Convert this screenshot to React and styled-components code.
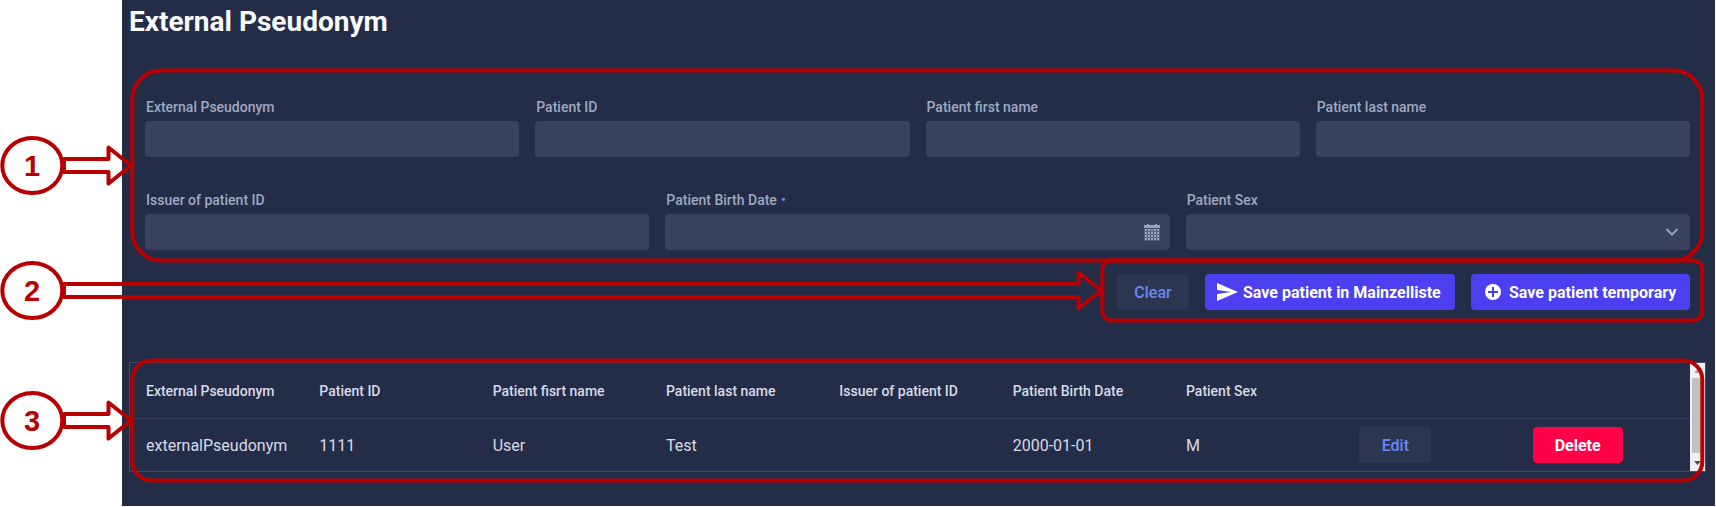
import React from 'react';
import styled, { createGlobalStyle } from 'styled-components';

const Global = createGlobalStyle`
  * { box-sizing: border-box; }
  body { margin: 0; background: #fff; font-family: Roboto, "Liberation Sans", sans-serif; overflow: hidden; }
`;

const Screen = styled.div`
  position: relative;
  height: 507px;
  padding: 0 1px 0 122px;
  background: #fff;
`;

const Panel = styled.main`
  height: 506px;
  background: #232d48;
  color: #d7dbe5;
  padding: 0 9px 0 7px;
  overflow: hidden;
`;

const Title = styled.h2`
  margin: 4px 0 0;
  font-size: 28px;
  line-height: 35px;
  font-weight: 700;
  color: #fbfcfe;
`;

const Form = styled.section`
  margin-top: 57px;
  padding: 0 16px;
`;

const FieldRow = styled.div`
  display: grid;
  grid-template-columns: repeat(${(p) => p.$columns}, 1fr);
  column-gap: 16px;
  height: ${(p) => p.$height}px;
`;

const Label = styled.label`
  display: block;
  margin-left: 1px;
  height: 25px;
  line-height: 22px;
  font-size: 14px;
  font-weight: 500;
  color: #9fa9c0;
`;

const Required = styled.span`
  margin-left: 4px;
  color: #6a86fb;
`;

const Input = styled.div`
  display: flex;
  align-items: center;
  justify-content: flex-end;
  height: 36px;
  padding-right: ${(p) => p.$inset || 11}px;
  border-radius: 4px;
  background: #39415d;
  color: #98a3bd;
`;

const Actions = styled.div`
  display: flex;
  justify-content: flex-end;
  gap: 16px;
  padding-right: 16px;
`;

const Button = styled.button`
  display: flex;
  align-items: center;
  justify-content: ${(p) => (p.$inset ? 'flex-start' : 'center')};
  gap: ${(p) => p.$gap || 0}px;
  width: ${(p) => p.$width}px;
  height: 36px;
  padding: 0 0 0 ${(p) => p.$inset || 0}px;
  border: 0;
  border-radius: 4px;
  font: ${(p) => (p.$kind ? 700 : 500)} 16px Roboto, "Liberation Sans", sans-serif;
  white-space: nowrap;
  color: ${(p) => (p.$kind ? '#fff' : '#6a86fb')};
  background: ${(p) => ({ primary: '#4b3ff0', danger: '#ff0048' })[p.$kind] || '#2d3650'};
`;

const GridFrame = styled.section`
  display: flex;
  height: 110px;
  margin-top: 52px;
  border: 1px solid #414b67;
`;

const Rows = styled.div`
  flex: 1;
`;

const Row = styled.div`
  display: grid;
  grid-template-columns: repeat(9, 1fr);
  align-items: center;
  height: ${(p) => (p.$head ? 56 : 52)}px;
  border-bottom: ${(p) => (p.$head ? '1px solid #39435e' : '0')};
  font-size: ${(p) => (p.$head ? 14 : 16)}px;
  font-weight: ${(p) => (p.$head ? 500 : 400)};
`;

const Cell = styled.div`
  padding-left: 16px;
  white-space: nowrap;
`;

const Scrollbar = styled.div`
  display: flex;
  flex-direction: column;
  align-items: center;
  width: 15px;
  padding-top: 6px;
  background: #f1f1f1;
`;

const Thumb = styled.div`
  width: 11px;
  height: 75px;
  margin: 5px 0 8px;
  background: #c1c1c1;
`;

const Annotations = styled.svg`
  position: absolute;
  inset: 0;
  pointer-events: none;
`;

const Calendar = () => (
  <svg width="16" height="17" viewBox="0 0 16 17" fill="currentColor">
    <path d="M0 1h3V0h2v1h6V0h2v1h3v3H0z" />
    <path d="M.5 4v12.500h15V4M.5 7.500h15M.5 10.500h15M.5 13.500h15M3.500 4v12M6.500 4v12M9.500 4v12M12.500 4v12" fill="none" stroke="currentColor" strokeWidth="1" opacity=".3" />
    {[5, 8, 11, 14].map((y) => [1, 4, 7, 10, 13].map((x) => <rect key={`${x}-${y}`} x={x} y={y} width="2" height="2" />))}
  </svg>
);

const Chevron = () => (
  <svg width="14" height="10" viewBox="0 0 14 10" fill="none" stroke="currentColor" strokeWidth="2">
    <path d="M1.500 2 7 7.500 12.500 2" />
  </svg>
);

const Plane = () => (
  <svg width="21" height="18" viewBox="0 0 21 18" fill="#fff">
    <path d="M0 0 21 9 0 18V11L14 9 0 7z" />
  </svg>
);

const Plus = () => (
  <svg width="16" height="16" viewBox="0 0 16 16">
    <circle cx="8" cy="8" r="8" fill="#fff" />
    <path d="M8 3v10M3 8h10" stroke="#4b3ff0" strokeWidth="2" />
  </svg>
);

const Arrow = ({ y, tip }) => (
  <path d={`M64 ${y - 6.5}H${tip - 22.5}V${y - 18}L${tip} ${y}L${tip - 22.5} ${y + 18}V${y + 6.5}H64Z`} strokeLinejoin="round" />
);

const Marker = ({ y, label }) => (
  <>
    <ellipse cx="32.300" cy={y} rx="30" ry="27.500" fill="#fff" />
    <text x="32" y={y + 10.5} textAnchor="middle" fill="#b90000" stroke="none" fontFamily="Liberation Sans, sans-serif" fontWeight="700" fontSize="29">{label}</text>
  </>
);

const headings = ['External Pseudonym', 'Patient ID', 'Patient fisrt name', 'Patient last name', 'Issuer of patient ID', 'Patient Birth Date', 'Patient Sex', '', ''];
const values = ['externalPseudonym', '1111', 'User', 'Test', '', '2000-01-01', 'M'];

export default function App() {
  return (
    <Screen>
      <Global />
      <Panel>
        <Title>External Pseudonym</Title>
        <Form>
          <FieldRow $columns={4} $height={93}>
            {['External Pseudonym', 'Patient ID', 'Patient first name', 'Patient last name'].map((name) => (
              <div key={name}><Label>{name}</Label><Input /></div>
            ))}
          </FieldRow>
          <FieldRow $columns={3} $height={85}>
            <div><Label>Issuer of patient ID</Label><Input /></div>
            <div><Label>Patient Birth Date<Required>•</Required></Label><Input $inset={10}><Calendar /></Input></div>
            <div><Label>Patient Sex</Label><Input><Chevron /></Input></div>
          </FieldRow>
        </Form>
        <Actions>
          <Button $width={72}>Clear</Button>
          <Button $width={250} $kind="primary" $inset={12} $gap={5}><Plane />Save patient in Mainzelliste</Button>
          <Button $width={219} $kind="primary" $inset={14} $gap={8}><Plus />Save patient temporary</Button>
        </Actions>
        <GridFrame>
          <Rows>
            <Row $head>{headings.map((h, i) => <Cell key={i}>{h}</Cell>)}</Row>
            <Row>
              {values.map((v, i) => <Cell key={i}>{v}</Cell>)}
              <Cell><Button $width={72}>Edit</Button></Cell>
              <Cell><Button $width={90} $kind="danger">Delete</Button></Cell>
            </Row>
          </Rows>
          <Scrollbar>
            <svg width="7" height="4"><path d="M0 4 3.500 0 7 4z" fill="#a3a3a3" /></svg>
            <Thumb />
            <svg width="7" height="4"><path d="M0 0h7L3.500 4z" fill="#505050" /></svg>
          </Scrollbar>
        </GridFrame>
      </Panel>
      <Annotations width="1716" height="507" fill="none" stroke="#b90000" strokeWidth="4">
        <rect x="132.300" y="70.500" width="1570" height="190" rx="29" />
        <rect x="1102.300" y="260.500" width="600" height="60" rx="9" />
        <rect x="132.300" y="360.500" width="1570" height="120" rx="19" />
        <path d="M64 159H108.500V147.500L122 158.300V172.700L108.500 183.500V172H64Z" fill="#fff" stroke="none" />
        <path d="M64 284H122V297H64Z" fill="#fff" stroke="none" />
        <path d="M64 414H108.500V402.500L122 413.300V427.700L108.500 438.500V427H64Z" fill="#fff" stroke="none" />
        <Arrow y={165.5} tip={131} />
        <Arrow y={290.5} tip={1101} />
        <Arrow y={420.5} tip={131} />
        <Marker y={165.5} label="1" />
        <Marker y={290.5} label="2" />
        <Marker y={420.5} label="3" />
      </Annotations>
    </Screen>
  );
}
